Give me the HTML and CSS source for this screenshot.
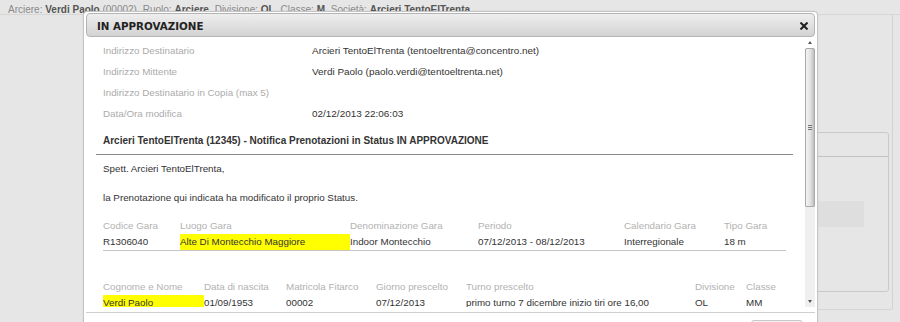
FILE: index.html
```html
<!DOCTYPE html>
<html lang="it">
<head>
<meta charset="utf-8">
<title>IN APPROVAZIONE</title>
<link rel="stylesheet" href="styles.css">
</head>
<body>
<div class="page">
  <div class="topbar">
    <span class="item"><span class="lbl">Arciere:</span> <b>Verdi Paolo</b> (00002)</span>
    <span class="item"><span class="lbl">Ruolo:</span> <b>Arciere</b></span>
    <span class="item"><span class="lbl">Divisione:</span> <b>OL</b></span>
    <span class="item"><span class="lbl">Classe:</span> <b>M</b></span>
    <span class="item"><span class="lbl">Società:</span> <b>Arcieri TentoElTrenta</b></span>
  </div>
  <div class="main">
    <div class="side">
      <div class="panel">
        <div class="panel-head"></div>
        <div class="panel-body"><div class="panel-field"></div></div>
      </div>
    </div>
  </div>
</div>

<div class="dialog">
  <div class="dlg-title">
    <span class="dlg-title-text">IN APPROVAZIONE</span>
    <span class="close" aria-label="chiudi">
      <svg width="8" height="8" viewBox="0 0 8 8"><path d="M1.2 1.2 L6.8 6.8 M6.8 1.2 L1.2 6.8" stroke="#1e1e1e" stroke-width="2" stroke-linecap="square"/></svg>
    </span>
  </div>
  <div class="dlg-content">
    <div class="scroll">
      <div class="info">
        <div class="row"><span class="k">Indirizzo Destinatario</span><span class="v">Arcieri TentoElTrenta (tentoeltrenta@concentro.net)</span></div>
        <div class="row"><span class="k">Indirizzo Mittente</span><span class="v">Verdi Paolo (paolo.verdi@tentoeltrenta.net)</span></div>
        <div class="row"><span class="k">Indirizzo Destinatario in Copia (max 5)</span><span class="v"></span></div>
        <div class="row"><span class="k">Data/Ora modifica</span><span class="v">02/12/2013 22:06:03</span></div>
      </div>
      <div class="subject"><span>Arcieri TentoElTrenta (12345) - Notifica Prenotazioni in Status IN APPROVAZIONE</span></div>
      <div class="mail">
        <p class="para p1">Spett. Arcieri TentoElTrenta,</p>
        <p class="para p2">la Prenotazione qui indicata ha modificato il proprio Status.</p>
        <table class="t t1">
          <colgroup><col class="c77"><col class="c170"><col class="c128"><col class="c146"><col class="c100"><col class="c62"></colgroup>
          <tr class="hd"><td>Codice Gara</td><td>Luogo Gara</td><td>Denominazione Gara</td><td>Periodo</td><td>Calendario Gara</td><td>Tipo Gara</td></tr>
          <tr class="vl"><td>R1306040</td><td class="hl">Alte Di Montecchio Maggiore</td><td>Indoor Montecchio</td><td>07/12/2013 - 08/12/2013</td><td>Interregionale</td><td>18 m</td></tr>
        </table>
        <table class="t t2">
          <colgroup><col class="c101"><col class="c82"><col class="c90"><col class="c90"><col class="c229"><col class="c51"><col class="c40"></colgroup>
          <tr class="hd"><td>Cognome e Nome</td><td>Data di nascita</td><td>Matricola Fitarco</td><td>Giorno prescelto</td><td>Turno prescelto</td><td>Divisione</td><td>Classe</td></tr>
          <tr class="vl"><td class="hl">Verdi Paolo</td><td>01/09/1953</td><td>00002</td><td>07/12/2013</td><td>primo turno 7 dicembre inizio tiri ore 16,00</td><td>OL</td><td>MM</td></tr>
        </table>
      </div>
    </div>
    <div class="vscroll">
      <div class="arrow up"></div>
      <div class="thumb"><span class="grip"></span></div>
      <div class="track"></div>
      <div class="arrow down"></div>
    </div>
  </div>
  <div class="dlg-buttons"><span class="btn"></span></div>
</div>
</body>
</html>
```

FILE: styles.css
```css
html, body {
  margin: 0;
  padding: 0;
}
body {
  background: #e6e6e6;
  font-family: "Liberation Sans", Arial, sans-serif;
  width: 900px;
  height: 322px;
  overflow: hidden;
  position: relative;
}
.page {
  display: flex;
  flex-direction: column;
  height: 322px;
}
.topbar {
  height: 15px;
  border-bottom: 1px solid #d6d6d6;
  padding: 2px 0 0 8px;
  box-sizing: border-box;
  font-size: 10px;
  line-height: 15px;
  color: #8a8a8a;
  white-space: nowrap;
}
.topbar .item { margin-right: 3px; }
.topbar b { color: #555; }
.main {
  flex: 1;
  display: flex;
  justify-content: flex-end;
  padding-right: 7px;
}
.side {
  width: 90px;
  border-right: 1px solid #d2d2d2;
  border-bottom: 1px solid #d6d6d6;
  border-bottom-right-radius: 3px;
  height: 295px;
  padding-right: 3px;
  box-sizing: border-box;
}
.panel {
  margin-top: 117px;
  height: 160px;
  border: 1px solid #c9c9c9;
  border-radius: 3px;
  box-sizing: border-box;
}
.panel-head {
  height: 23px;
  border-bottom: 1px solid #c3c3c3;
}
.panel-body {
  padding-top: 44px;
}
.panel-field {
  width: 60px;
  height: 26px;
  background: #dedede;
}

/* dialog */
.dialog {
  position: absolute;
  left: 83px;
  top: 11px;
  width: 735px;
  height: 330px;
  box-sizing: border-box;
  border: 1px solid #c4c4c4;
  border-radius: 4px;
  background: #fff;
  padding: 1px 2px 0 2px;
  box-shadow: 0 0 2px rgba(0,0,0,0.08);
}
.dlg-title {
  height: 24px;
  box-sizing: border-box;
  border: 1px solid #b4b4b4;
  border-radius: 4px;
  background: linear-gradient(#eeeeee, #d3d3d3);
  display: flex;
  align-items: center;
  justify-content: space-between;
  padding: 1px 5px 0 10px;
}
.dlg-title-text {
  font-family: "DejaVu Sans", Verdana, sans-serif;
  font-weight: bold;
  font-size: 10.3px;
  color: #222;
}
.close {
  display: flex;
  width: 10px;
  height: 10px;
  align-items: center;
  justify-content: center;
}
.dlg-content {
  display: flex;
  height: 270px;
  margin-bottom: 5px;
}
.scroll {
  flex: 1;
  overflow: hidden;
  padding: 3px 12px 0 10px;
  font-size: 9.8px;
  color: #333;
}
.info { padding-left: 7px; }
.row {
  display: flex;
  height: 21px;
  align-items: center;
}
.k {
  width: 209px;
  flex: none;
  color: #ababab;
}
.v { font-size: 9.95px; }
.subject {
  margin-top: 9px;
  height: 21px;
  border-bottom: 1px solid #8a8a8a;
  padding-left: 7px;
  line-height: 16px;
  font-weight: bold;
  font-size: 10px;
  color: #333;
}
.mail { padding-left: 7px; }
.para {
  margin: 0;
  line-height: 16px;
}
.p1 { margin-top: 6px; }
.p2 { margin-top: 13px; }
.t {
  border-collapse: collapse;
  table-layout: fixed;
  width: 683px;
  font-size: 9.8px;
}
.t td {
  padding: 0;
  height: 16px;
  line-height: 16px;
  white-space: nowrap;
  overflow: hidden;
}
.t .hd td { color: #b2b2b2; }
.t .vl td { color: #333; border-bottom: 1px solid #c4c4c4; }
.t td.hl { background: #ffff00; }
.t1 { margin-top: 12px; }
.t2 { margin-top: 28px; }
.c77 { width: 77px; }
.c170 { width: 170px; }
.c128 { width: 128px; }
.c146 { width: 146px; }
.c100 { width: 100px; }
.c62 { width: 62px; }
.c101 { width: 101px; }
.c82 { width: 82px; }
.c90 { width: 90px; }
.c229 { width: 229px; }
.c51 { width: 51px; }
.c40 { width: 40px; }

/* fake scrollbar */
.vscroll {
  width: 10px;
  display: flex;
  flex-direction: column;
  background: #efefef;
}
.arrow {
  height: 11px;
  display: flex;
  align-items: center;
  justify-content: center;
}
.arrow::before {
  content: "";
  width: 0;
  height: 0;
  border-left: 2.5px solid transparent;
  border-right: 2.5px solid transparent;
}
.arrow.up::before { border-bottom: 3px solid #555; }
.arrow.down::before { border-top: 3px solid #555; }
.arrow.up { background: #fff; }
.thumb {
  height: 159px;
  box-sizing: border-box;
  border: 1px solid #a9a9a9;
  border-radius: 2px 2px 1px 1px;
  background: linear-gradient(90deg, #f4f4f4, #e2e2e2 55%, #bdbdbd);
  display: flex;
  align-items: center;
  justify-content: center;
}
.grip {
  width: 4px;
  height: 5px;
  background: repeating-linear-gradient(#777 0 1px, transparent 1px 2px);
}
.track { flex: 1; }
.dlg-buttons {
  border-top: 1px solid #cfcfcf;
  height: 40px;
  display: flex;
  justify-content: flex-end;
  padding: 7px 12px 0 0;
  box-sizing: border-box;
}
.btn {
  width: 50px;
  height: 24px;
  border: 1px solid #c8c8c8;
  border-radius: 3px;
  background: #f3f3f3;
}
```
